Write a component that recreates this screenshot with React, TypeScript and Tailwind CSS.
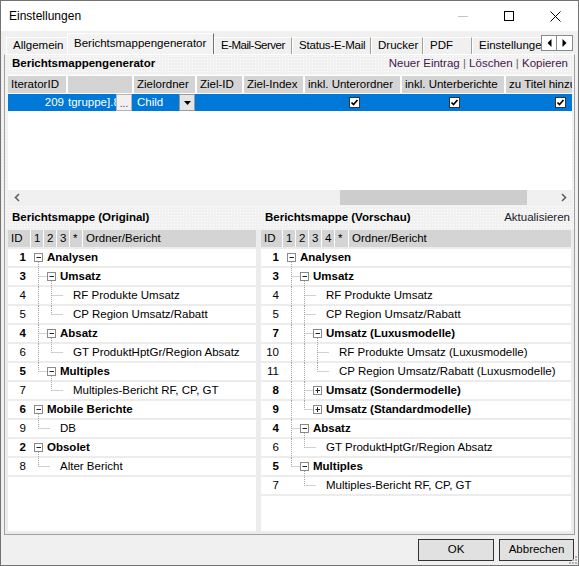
import React from 'react';

type TreeNode = { id: number; label: string; children?: TreeNode[]; collapsed?: boolean };
type FlatRow = { node: TreeNode; level: number; last: boolean; guides: boolean[] };

const original: TreeNode[] = [
  {
    id: 1,
    label: 'Analysen',
    children: [
      {
        id: 3,
        label: 'Umsatz',
        children: [
          { id: 4, label: 'RF Produkte Umsatz' },
          { id: 5, label: 'CP Region Umsatz/Rabatt' },
        ],
      },
      { id: 4, label: 'Absatz', children: [{ id: 6, label: 'GT ProduktHptGr/Region Absatz' }] },
      { id: 5, label: 'Multiples', children: [{ id: 7, label: 'Multiples-Bericht RF, CP, GT' }] },
    ],
  },
  { id: 6, label: 'Mobile Berichte', children: [{ id: 9, label: 'DB' }] },
  { id: 2, label: 'Obsolet', children: [{ id: 8, label: 'Alter Bericht' }] },
];

const preview: TreeNode[] = [
  {
    id: 1,
    label: 'Analysen',
    children: [
      {
        id: 3,
        label: 'Umsatz',
        children: [
          { id: 4, label: 'RF Produkte Umsatz' },
          { id: 5, label: 'CP Region Umsatz/Rabatt' },
          {
            id: 7,
            label: 'Umsatz (Luxusmodelle)',
            children: [
              { id: 10, label: 'RF Produkte Umsatz (Luxusmodelle)' },
              { id: 11, label: 'CP Region Umsatz/Rabatt (Luxusmodelle)' },
            ],
          },
          { id: 8, label: 'Umsatz (Sondermodelle)', collapsed: true, children: [{ id: 0, label: '' }] },
          { id: 9, label: 'Umsatz (Standardmodelle)', collapsed: true, children: [{ id: 0, label: '' }] },
        ],
      },
      { id: 4, label: 'Absatz', children: [{ id: 6, label: 'GT ProduktHptGr/Region Absatz' }] },
      { id: 5, label: 'Multiples', children: [{ id: 7, label: 'Multiples-Bericht RF, CP, GT' }] },
    ],
  },
];

function flatten(nodes: TreeNode[], level = 0, guides: boolean[] = [], out: FlatRow[] = []) {
  nodes.forEach((node, i) => {
    const last = i === nodes.length - 1;
    out.push({ node, level, last, guides });
    if (node.children && !node.collapsed) {
      flatten(node.children, level + 1, level === 0 ? [] : [...guides, !last], out);
    }
  });
  return out;
}

const DOT = '#a3a3a3';

function TreeLines({ row }: { row: FlatRow }) {
  const { level, last, guides, node } = row;
  const hasKids = !!node.children?.length;
  const c = 9.5 + 13 * level;
  return (
    <svg width={18 + 13 * level} height={17} className="shrink-0 overflow-visible">
      {guides.map((g, d) =>
        g ? <line key={d} x1={9.5 + 13 * d} x2={9.5 + 13 * d} y1={0} y2={19} stroke={DOT} strokeDasharray="1 1" /> : null
      )}
      {level > 0 && <line x1={c - 13} x2={c - 13} y1={0} y2={last ? 8.5 : 19} stroke={DOT} strokeDasharray="1 1" />}
      {level > 0 && <line x1={c - 13} x2={hasKids ? c - 4 : c - 1} y1={8.5} y2={8.5} stroke={DOT} strokeDasharray="1 1" />}
      {hasKids && (
        <>
          <rect x={c - 4} y={4.5} width={8} height={8} fill="#fff" stroke="#8a8a8a" />
          <line x1={c - 2} x2={c + 2.5} y1={8.5} y2={8.5} stroke="#222" />
          {node.collapsed ? (
            <line x1={c} x2={c} y1={6} y2={11} stroke="#222" />
          ) : (
            <line x1={c} x2={c} y1={13} y2={19} stroke={DOT} strokeDasharray="1 1" />
          )}
        </>
      )}
    </svg>
  );
}

function TreePanel({ nodes, cols }: { nodes: TreeNode[]; cols: { label: string; w: string }[] }) {
  const rows = flatten(nodes);
  return (
    <div className="flex flex-col bg-white">
      <div className="flex gap-px h-[19px] border-b-2 border-[#ececec] bg-white">
        {cols.map((col) => (
          <div key={col.label} className={`${col.w} shrink-0 bg-[#d4d4d4] pl-[3px] leading-[17px]`}>
            {col.label}
          </div>
        ))}
        <div className="flex-1 bg-[#d4d4d4] pl-[3px] leading-[17px]">Ordner/Bericht</div>
      </div>
      {rows.map((row, i) => {
        const bold = row.node.children ? 'font-bold' : '';
        return (
          <div key={i} className="flex h-[19px] border-b-2 border-[#ececec] bg-white">
            <div className={`w-[21px] shrink-0 text-right pr-[3px] leading-[17px] ${bold}`}>{row.node.id}</div>
            <TreeLines row={row} />
            <div className={`leading-[17px] whitespace-nowrap ${bold}`}>{row.node.label}</div>
          </div>
        );
      })}
    </div>
  );
}

function CheckBox() {
  return (
    <div className="w-[11px] h-[11px] border border-[#333] bg-white flex items-center justify-center">
      <svg width="9" height="9" viewBox="0 0 9 9">
        <path d="M1.5 4.5 L3.5 6.5 L7.5 2" stroke="#000" strokeWidth="1.7" fill="none" />
      </svg>
    </div>
  );
}

function Chevron({ dir }: { dir: 'left' | 'right' }) {
  return (
    <svg width="6" height="9" viewBox="0 0 6 9">
      <path d={dir === 'left' ? 'M5 1 L1.5 4.5 L5 8' : 'M1 1 L4.5 4.5 L1 8'} stroke="#606060" strokeWidth="1.6" fill="none" />
    </svg>
  );
}

const gridCols = ['w-[58px]', 'w-[64px]', 'w-[61px]', 'w-[45px]', 'w-[59px]', 'w-[95px]', 'w-[102px]', 'w-[109px]'];
const gridHeaders = ['IteratorID', '', 'Zielordner', 'Ziel-ID', 'Ziel-Index', 'inkl. Unterordner', 'inkl. Unterberichte', 'zu Titel hinzufügen'];

const tabs = [
  { label: 'Allgemein', w: 'w-[62px]', track: '' },
  { label: 'Berichtsmappengenerator', w: 'w-[147px]', track: '', active: true },
  { label: 'E-Mail-Server', w: 'w-[78px]', track: 'tracking-[-0.5px]' },
  { label: 'Status-E-Mail', w: 'w-[79px]', track: 'tracking-[-0.2px]' },
  { label: 'Drucker', w: 'w-[52px]', track: '' },
  { label: 'PDF', w: 'w-[49px]', track: '' },
  { label: 'Einstellungen', w: 'w-[90px]', track: '' },
];

const dotted = "bg-[#f1f1f1] bg-[radial-gradient(#ffffff_0.8px,transparent_0.9px)] bg-[length:3px_3px]";

export default function App() {
  return (
    <div className="relative w-[579px] h-[566px] border border-[#737373] bg-[#f0f0f0] flex flex-col text-[11.5px] text-black font-['Liberation_Sans',Arial,sans-serif] overflow-hidden">
      {/* Titelleiste */}
      <div className="h-[30px] shrink-0 bg-white flex items-center">
        <div className="pl-[8px] text-[12px] flex-1">Einstellungen</div>
        <div className="w-[46px] h-full flex items-center justify-center">
          <svg width="10" height="10"><line x1="0" x2="10" y1="5.5" y2="5.5" stroke="#c4c4c4" /></svg>
        </div>
        <div className="w-[46px] h-full flex items-center justify-center">
          <svg width="10" height="10"><rect x="0.5" y="0.5" width="9" height="9" fill="none" stroke="#000" /></svg>
        </div>
        <div className="w-[46px] h-full flex items-center justify-center">
          <svg width="11" height="11"><path d="M0.5 0.5 L10.5 10.5 M10.5 0.5 L0.5 10.5" stroke="#000" /></svg>
        </div>
      </div>

      {/* Reiter */}
      <div className="h-[23px] shrink-0 flex pl-[5px] pr-[5px]">
        <div className="flex-1 flex items-end overflow-hidden">
          {tabs.map((t) =>
            t.active ? (
              <div
                key={t.label}
                className={`${t.w} shrink-0 h-[22px] -mb-px relative z-10 border border-b-0 border-l-white border-t-white border-r-[#707070] bg-[#f3f3f3] pl-[6px] leading-[18px] whitespace-nowrap -ml-[1px]`}
              >
                {t.label}
              </div>
            ) : (
              <div
                key={t.label}
                className={`${t.w} ${t.track} shrink-0 h-[17px] border border-b-0 border-l-white border-t-white border-r-[#a0a0a0] bg-[#f0f0f0] pl-[6px] leading-[15px] whitespace-nowrap overflow-hidden`}
              >
                {t.label}
              </div>
            )
          )}
        </div>
        <div className="flex self-start mt-[4px] shrink-0">
          <div className="w-[16px] h-[16px] border border-[#8a8a8a] bg-white flex items-center justify-center">
            <svg width="5" height="8"><path d="M4.5 0 L0.5 4 L4.5 8 Z" fill="#000" /></svg>
          </div>
          <div className="w-[16px] h-[16px] border border-l-0 border-[#8a8a8a] bg-white flex items-center justify-center">
            <svg width="5" height="8"><path d="M0.5 0 L4.5 4 L0.5 8 Z" fill="#000" /></svg>
          </div>
        </div>
      </div>

      {/* Reiterinhalt */}
      <div className={`mx-[3px] h-[481px] shrink-0 border border-[#a0a0a0] border-t-white flex flex-col ${dotted}`}>
        <div className="h-[20px] shrink-0 flex items-center pb-[3px] pl-[7px] pr-[6px]">
          <div className="font-bold flex-1">Berichtsmappengenerator</div>
          <div className="text-[#47164c]">
            Neuer Eintrag <span className="text-[#666]">|</span> Löschen <span className="text-[#666]">|</span> Kopieren
          </div>
        </div>

        {/* Iterator-Tabelle */}
        <div className="ml-[3px] mr-[2px] h-[130px] shrink-0 bg-white flex flex-col overflow-hidden">
          <div className="flex gap-[2px] h-[17px] mt-[1px] shrink-0">
            {gridCols.map((w, i) => (
              <div key={i} className={`${w} shrink-0 bg-[#d4d4d4] pl-[3px] leading-[17px] whitespace-nowrap overflow-hidden`}>
                {gridHeaders[i]}
              </div>
            ))}
          </div>
          <div className="flex gap-[2px] h-[17px] mt-[1px] shrink-0 bg-[#0078d7] text-white">
            <div className="w-[58px] shrink-0 text-right pr-[2px] leading-[17px]">209</div>
            <div className="w-[64px] shrink-0 flex">
              <div className="flex-1 overflow-hidden whitespace-nowrap leading-[17px]">tgruppe].8</div>
              <div className="w-[16px] shrink-0 bg-[#f0f0f0] border border-[#b5b5b5] text-[#6a1a80] text-[10px] leading-[17px] text-center overflow-hidden">...</div>
            </div>
            <div className="w-[61px] shrink-0 flex pl-[3px] -mr-[2px]">
              <div className="flex-1 leading-[17px]">Child</div>
              <div className="w-[16px] shrink-0 bg-[#e5e5e5] border border-[#9a9a9a] flex items-center justify-center">
                <svg width="7" height="4"><path d="M0 0 L7 0 L3.5 4 Z" fill="#000" /></svg>
              </div>
            </div>
            <div className="w-[45px] shrink-0 ml-[2px]" />
            <div className="w-[59px] shrink-0" />
            <div className="w-[95px] shrink-0 flex items-center justify-center pl-[4px]">
              <CheckBox />
            </div>
            <div className="w-[102px] shrink-0 flex items-center justify-center pl-[3px]">
              <CheckBox />
            </div>
            <div className="w-[109px] shrink-0 flex items-center justify-center">
              <CheckBox />
            </div>
          </div>
          <div className="flex-1" />
          <div className="h-[15px] shrink-0 bg-[#f0f0f0] flex">
            <div className="w-[17px] shrink-0 flex items-center justify-center">
              <Chevron dir="left" />
            </div>
            <div className="flex-1 pl-[315px]">
              <div className="w-[187px] h-full bg-[#cdcdcd]" />
            </div>
            <div className="w-[17px] shrink-0 flex items-center justify-center">
              <Chevron dir="right" />
            </div>
          </div>
        </div>

        {/* Berichtsmappen */}
        <div className="h-[25px] shrink-0 flex gap-[5px] px-[3px] items-center">
          <div className="w-[248px] shrink-0 pl-[4px] font-bold">Berichtsmappe (Original)</div>
          <div className="flex-1 flex pl-[4px] pr-[1px]">
            <div className="flex-1 font-bold">Berichtsmappe (Vorschau)</div>
            <div className="text-[#1a1a2a]">Aktualisieren</div>
          </div>
        </div>
        <div className="flex-1 flex gap-[5px] px-[3px] pb-[3px] bg-[#ececec]">
          <div className="w-[248px] shrink-0 flex flex-col bg-white">
            <TreePanel
              nodes={original}
              cols={[
                { label: 'ID', w: 'w-[22px]' },
                { label: '1', w: 'w-[12px]' },
                { label: '2', w: 'w-[12px]' },
                { label: '3', w: 'w-[12px]' },
                { label: '*', w: 'w-[12px]' },
              ]}
            />
            <div className="flex-1 bg-white" />
          </div>
          <div className="flex-1 flex flex-col bg-white">
            <TreePanel
              nodes={preview}
              cols={[
                { label: 'ID', w: 'w-[21px]' },
                { label: '1', w: 'w-[12px]' },
                { label: '2', w: 'w-[12px]' },
                { label: '3', w: 'w-[12px]' },
                { label: '4', w: 'w-[12px]' },
                { label: '*', w: 'w-[13px]' },
              ]}
            />
            <div className="flex-1 bg-white" />
          </div>
        </div>
      </div>

      {/* Schaltflächen */}
      <div className="flex-1 flex justify-end items-center gap-[5px] pr-[4px]">
        <button className="w-[76px] h-[22px] border border-[#333] bg-[#e1e1e1] text-[11.5px]">OK</button>
        <button className="w-[75px] h-[22px] border border-[#333] bg-[#e1e1e1] text-[11.5px]">Abbrechen</button>
      </div>
      <svg width="10" height="10" className="absolute right-0 bottom-0">
        <rect x="7" y="1" width="2" height="2" fill="#b0b0b0" />
        <rect x="4" y="4" width="2" height="2" fill="#b0b0b0" />
        <rect x="7" y="4" width="2" height="2" fill="#b0b0b0" />
        <rect x="1" y="7" width="2" height="2" fill="#b0b0b0" />
        <rect x="4" y="7" width="2" height="2" fill="#b0b0b0" />
        <rect x="7" y="7" width="2" height="2" fill="#b0b0b0" />
      </svg>
    </div>
  );
}
